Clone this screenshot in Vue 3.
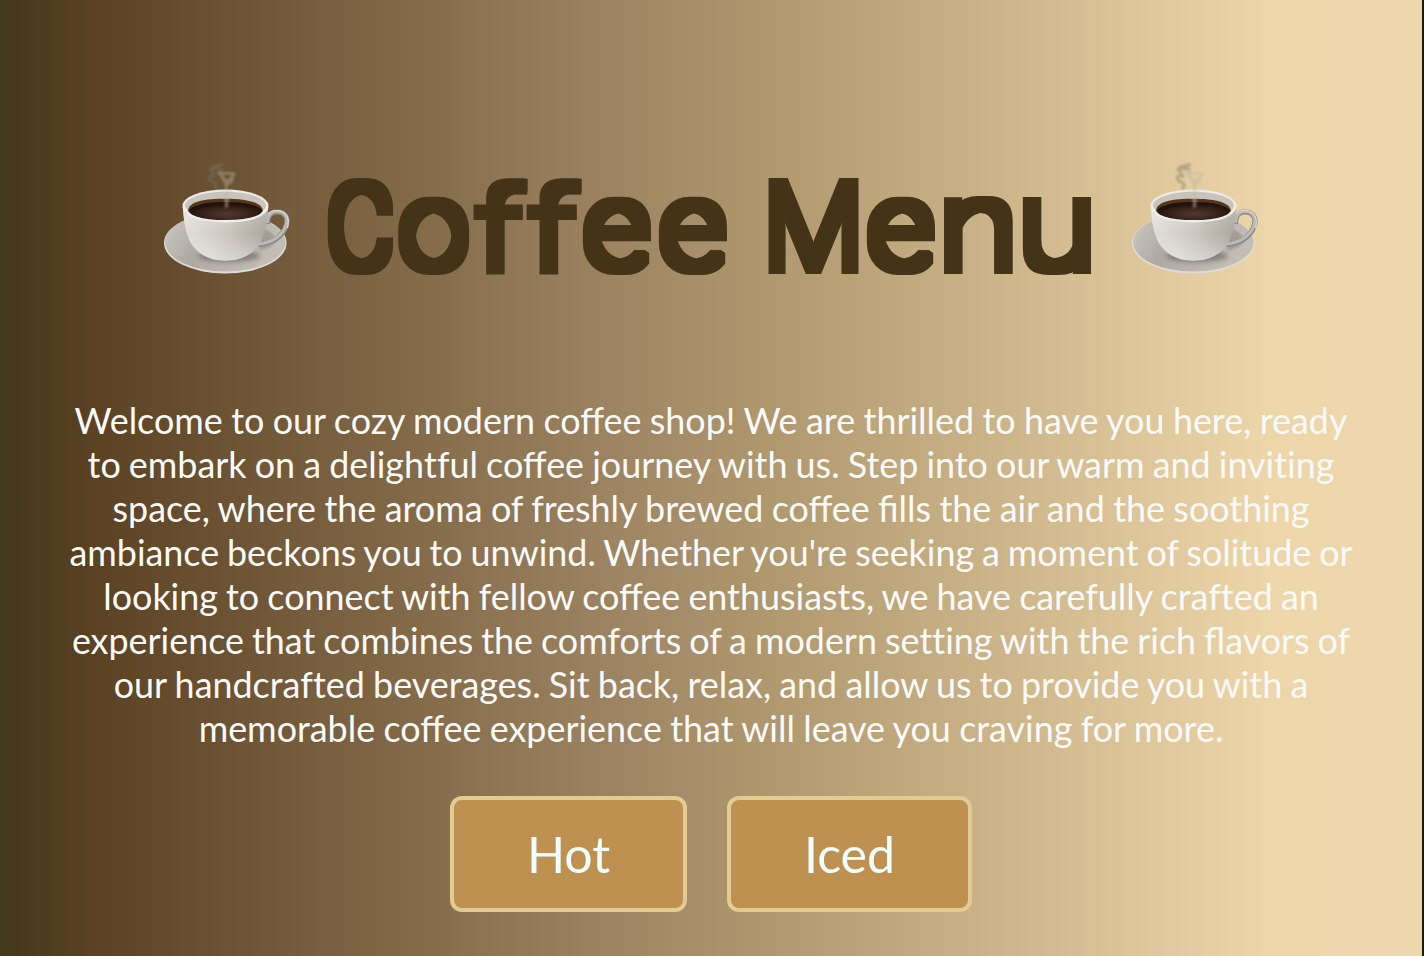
<script setup>
const letters = [
  { c: 'C', x: 326, w: 68, s: 118 },
  { c: 'o', x: 397.4, w: 72.4, s: 124 },
  { c: 'f', x: 474, w: 48, s: 114 },
  { c: 'f', x: 527, w: 49, s: 114 },
  { c: 'e', x: 582, w: 69, s: 124 },
  { c: 'e', x: 658, w: 69, s: 124 },
  { c: ' ', x: 730, w: 30, s: 119 },
  { c: 'M', x: 763, w: 101, s: 121 },
  { c: 'e', x: 866, w: 69, s: 124 },
  { c: 'n', x: 937.8, w: 81, s: 126 },
  { c: 'u', x: 1017, w: 80, s: 127 }
]
const cups = ['left', 'right']
</script>

<template>
  <main class="page">
    <header class="hero">
      <svg v-for="side in cups" :key="side" :class="['cup', side]" viewBox="0 0 160 140">
        <defs>
          <linearGradient :id="side + 'Body'" x1="0" x2="1" y1="0.2" y2="0.5">
            <stop offset="0" stop-color="#e6e3de" /><stop offset=".48" stop-color="#d0ccc4" /><stop offset="1" stop-color="#aaa59c" />
          </linearGradient>
          <linearGradient :id="side + 'Shade'" x1="0" x2="0" y1="0" y2="1">
            <stop offset="0" stop-color="#fff" stop-opacity=".1" /><stop offset=".5" stop-color="#fff" stop-opacity="0" /><stop offset="1" stop-color="#fff" stop-opacity=".45" />
          </linearGradient>
          <linearGradient :id="side + 'Plate'" x1="0" x2="1" y1="0" y2=".3">
            <stop offset="0" stop-color="#cecbc5" /><stop offset=".4" stop-color="#aeaaa3" /><stop offset="1" stop-color="#c2beb6" />
          </linearGradient>
          <radialGradient :id="side + 'Coffee'" cx=".52" cy=".65" r=".55">
            <stop offset="0" stop-color="#533b32" /><stop offset=".65" stop-color="#35211a" /><stop offset="1" stop-color="#20110b" />
          </radialGradient>
          <filter :id="side + 'Blur'" x="-50%" y="-50%" width="200%" height="200%"><feGaussianBlur stdDeviation="1.2" /></filter>
          <filter :id="side + 'Soft'" x="-50%" y="-50%" width="200%" height="200%"><feGaussianBlur stdDeviation="2.5" /></filter>
        </defs>
        <ellipse cx="75.3" cy="93" rx="61.3" ry="30.5" fill="#dedcd7" />
        <ellipse cx="75.3" cy="92.3" rx="60.2" ry="29.3" :fill="`url(#${side}Plate)`" />
        <ellipse cx="79" cy="106" rx="31" ry="6" fill="#55514a" opacity=".55" :filter="`url(#${side}Soft)`" />
        <path d="M112 77Q124 83 127 91Q119 100 109 100Z" fill="#77736d" opacity=".4" :filter="`url(#${side}Blur)`" />
        <path d="M117.5 74C117.5 65 121 62 127 62C134 62 138.5 67 136.5 74.5C133.5 86 122 94 108 94.5" fill="none" stroke="#8b8883" stroke-width="5.2" />
        <path d="M117.5 73C117.5 64.5 121 61.5 127 61.5C134 61.5 138.5 66.5 136.3 74.5C133.3 85.5 121 93.5 108 94" fill="none" stroke="#bcb9b4" stroke-width="3.2" />
        <path d="M118 64C122 59.3 132 59 136.5 65Q139.5 70 137.5 78" fill="none" stroke="#e0deda" stroke-width="1.1" />
        <path d="M32.7 57C33.5 68 34.5 78 38 87C42 98 52 107 64 109.5C71 111 80 111 87 109.5C99 107 109 98 113 87C116.5 77 117.8 68 118.3 57Z" :fill="`url(#${side}Body)`" />
        <path d="M32.7 57C33.5 68 34.5 78 38 87C42 98 52 107 64 109.5C71 111 80 111 87 109.5C99 107 109 98 113 87C116.5 77 117.8 68 118.3 57Z" :fill="`url(#${side}Shade)`" />
        <ellipse cx="75.5" cy="55.5" rx="43" ry="16" fill="#eeece8" />
        <ellipse cx="75.5" cy="55.5" rx="40.5" ry="13.8" fill="#c8c4bc" />
        <path d="M38 61C38.5 51 55 48.7 75.5 48.7S112 52 113 61Q100 69.5 75.5 69.5T38 61Z" fill="#55361a" />
        <ellipse cx="75.5" cy="61.3" rx="36.5" ry="9.4" :fill="`url(#${side}Coffee)`" />
        <path d="M33.6 57Q38 71.2 75.5 71.2Q113 71.2 117.4 57" fill="none" stroke="#f1eeea" stroke-width="2.4" />
        <g fill="none" :filter="`url(#${side}Blur)`" opacity=".48">
          <path d="M59 21C61 15 66 18 73 14M60 20Q67 17 72 20M61 19Q63 25 66 27C57 23 57 30 65 33Q68 35 64 39" stroke="#807765" stroke-width="2.8" />
          <path d="M68 23Q79 23 84 24Q80 31 75 31C70 29 73 22 69 23Q75 28 76 35T77 57M77 34Q84 32 82 27" stroke="#bdb39f" stroke-width="2.6" />
          <path d="M70 41Q76 42 76 58M82 40Q78 43 77 55" stroke="#c8bfae" stroke-width="2" />
        </g>
      </svg>
      <h1 class="title">
        <svg class="wordmark" viewBox="320 130 784 190">
          <defs>
            <filter id="blocky" filterUnits="userSpaceOnUse" x="310" y="130" width="804" height="190" color-interpolation-filters="sRGB">
              <feMorphology operator="dilate" radius="5" />
            </filter>
          </defs>
          <text y="269" filter="url(#blocky)"><tspan v-for="(l, i) in letters" :key="i" :x="l.x" :font-size="l.s" :textLength="l.w" lengthAdjust="spacingAndGlyphs">{{ l.c }}</tspan></text>
        </svg>
      </h1>
    </header>
    <p class="intro">
      <span class="l1">Welcome to our cozy modern coffee shop! We are thrilled to have you here, ready</span><br />
      <span class="l2">to embark on a deligh<i>tf</i>ul coffee journey with us. Step into our warm and invi<i>ti</i>ng</span><br />
      <span class="l3">space, where the aroma of freshly brewed coffee fills the air and the soothing</span><br />
      <span class="l4">ambiance beckons you to unwind. Whether you're seeking a moment of solitude or</span><br />
      <span class="l5">looking to connect with fellow coffee enthusiasts, we have carefully cra<i>ft</i>ed an</span><br />
      <span class="l6">experience that combines the comforts of a modern se<i>tti</i>ng with the rich flavors of</span><br />
      <span class="l7">our handcra<i>ft</i>ed beverages. Sit back, relax, and allow us to provide you with a</span><br />
      <span class="l8">memorable coffee experience that will leave you craving for more.</span>
    </p>
    <nav class="choices">
      <button class="choice hot">Hot</button>
      <button class="choice iced">Iced</button>
    </nav>
  </main>
</template>

<style>
body { margin: 0; overflow: hidden; }
</style>

<style scoped>
.page {
  box-sizing: border-box;
  width: 1424px;
  height: 956px;
  padding-top: 150px;
  border-right: 2px solid #171b12;
  background: linear-gradient(90deg, #42381a 0, #4d3d1d 45px, #594122 88px, #a78f6c 695px, #ab9469 735px, #edd6aa 1270px, #edd7ac 1422px);
  font-family: Lato, sans-serif;
}
.hero {
  display: flex;
  align-items: flex-start;
  width: 1424px;
  height: 249px;
}
.cup { width: 160px; height: 140px; flex: none; }
.cup.left { order: 1; margin-left: 150px; }
.cup.right { order: 3; margin-left: 14px; }
.title { order: 2; margin: -20px 0 0 10px; width: 784px; height: 190px; flex: none; }
.wordmark { display: block; width: 784px; height: 190px; }
.wordmark text { font-family: Roboto, sans-serif; font-weight: 300; fill: #443317; white-space: pre; }
.intro {
  margin: 0;
  width: 1422px;
  text-align: center;
  white-space: nowrap;
  font-size: 35.9px;
  line-height: 44px;
  color: #fafafa;
}
.intro i { font-style: normal; font-variant-ligatures: none; }
.l1 { word-spacing: -.75px; }
.l2 { word-spacing: -1.05px; }
.l3 { word-spacing: -.8px; }
.l4 { word-spacing: -1.3px; }
.l5 { word-spacing: -1.05px; }
.l6 { word-spacing: -1.2px; }
.l7 { word-spacing: -1px; }
.l8 { word-spacing: -.85px; }
.choices {
  display: flex;
  justify-content: center;
  gap: 40px;
  margin-top: 45px;
}
.choice {
  box-sizing: border-box;
  height: 116px;
  padding: 0;
  border: 4px solid #e3cc94;
  border-radius: 12px;
  background: #be9151;
  color: azure;
  font: 400 50px/60px Lato, sans-serif;
}
.hot { width: 237px; }
.iced { width: 245px; }
</style>
